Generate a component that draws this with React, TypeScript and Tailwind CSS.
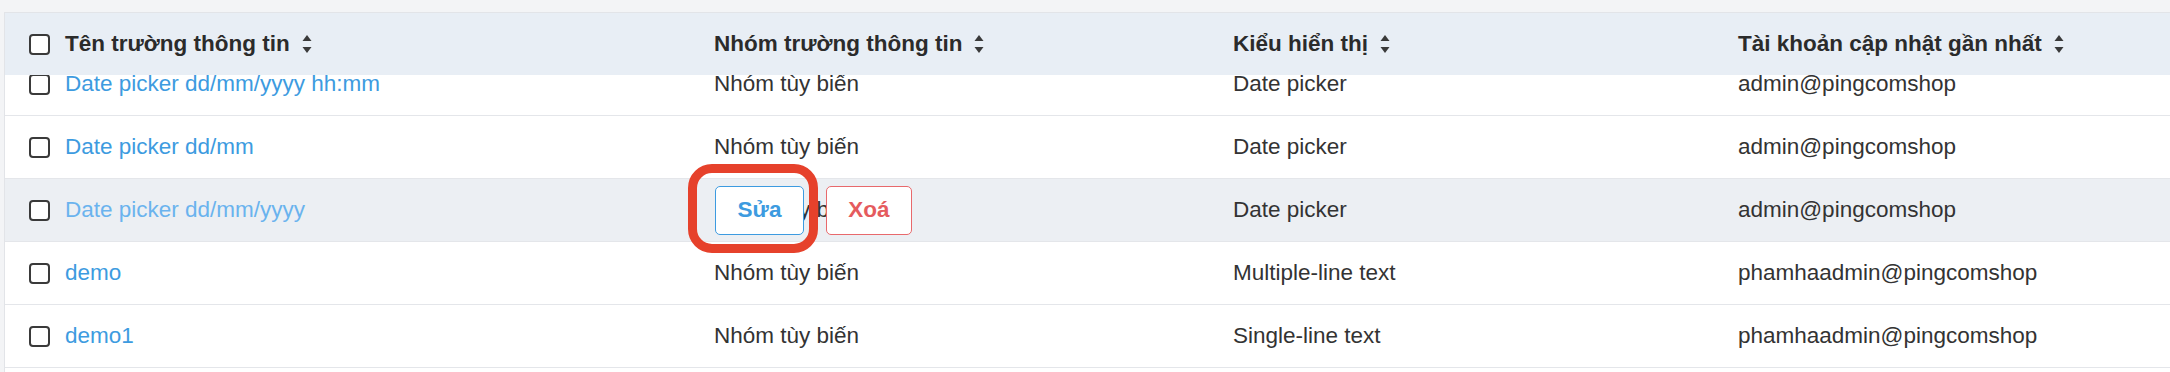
import React from 'react';

type Row = {
  name: string;
  group: string;
  kind: string;
  account: string;
};

const rows: Row[] = [
  { name: 'Date picker dd/mm', group: 'Nhóm tùy biến', kind: 'Date picker', account: 'admin@pingcomshop' },
  { name: 'Date picker dd/mm/yyyy', group: 'Nhóm tùy biến', kind: 'Date picker', account: 'admin@pingcomshop' },
  { name: 'demo', group: 'Nhóm tùy biến', kind: 'Multiple-line text', account: 'phamhaadmin@pingcomshop' },
  { name: 'demo1', group: 'Nhóm tùy biến', kind: 'Single-line text', account: 'phamhaadmin@pingcomshop' },
];

const cols = 'grid grid-cols-[709px_519px_505px_1fr] items-center';

function SortIcon() {
  return (
    <svg width="10" height="18" viewBox="0 0 10 18" className="shrink-0">
      <polygon points="5,0 9.5,6 0.5,6" fill="#3a3a3a" />
      <polygon points="0.5,12 9.5,12 5,18" fill="#3a3a3a" />
    </svg>
  );
}

function Checkbox() {
  return <div className="w-[21px] h-[21px] rounded-[4px] border-[2.5px] border-[#3a3a3a] bg-white shrink-0" />;
}

function HeaderCell({ label, first }: { label: string; first?: boolean }) {
  return (
    <div className={`flex items-center gap-3 ${first ? 'pl-[24px]' : ''}`}>
      {first && <div className="mr-[3px]"><Checkbox /></div>}
      <span className="font-bold text-[#2b2b2b]">{label}</span>
      <SortIcon />
    </div>
  );
}

function DataRow({ row, hovered }: { row: Row; hovered?: boolean }) {
  return (
    <div className={`${cols} h-[63px] border-b border-[#e4e6ea] ${hovered ? 'bg-[#eceff3]' : 'bg-white'}`}>
      <div className="flex items-center gap-[15px] pl-[24px]">
        <Checkbox />
        <span className={hovered ? 'text-[#6ab3ee]' : 'text-[#3d9be0]'}>{row.name}</span>
      </div>
      <div className="relative h-full flex items-center text-[#333]">
        {row.group}
        {hovered && (
          <>
            <div className="absolute left-[1px] top-0 h-full flex items-center gap-[22px]">
              <button className="w-[89px] h-[49px] rounded-[5px] border border-[#3d9be0] bg-white text-[#3d9be0] font-bold">
                Sửa
              </button>
              <button className="w-[86px] h-[49px] rounded-[5px] border border-[#e8696c] bg-white text-[#e55b5e] font-bold">
                Xoá
              </button>
            </div>
            <div className="absolute left-[-26px] top-[-15px] w-[130px] h-[89px] rounded-[24px] border-[9px] border-[#e6412b]" />
          </>
        )}
      </div>
      <div className="text-[#333]">{row.kind}</div>
      <div className="text-[#333]">{row.account}</div>
    </div>
  );
}

export default function App() {
  return (
    <div className="w-[2170px] h-[372px] overflow-hidden bg-[#f3f4f6] pt-[12px] pl-[4px] text-[22.5px] font-['Liberation_Sans',Arial,sans-serif]">
      <div className="bg-white border-l border-t border-[#e2e4e8] h-full">
        <div className={`${cols} h-[62px] bg-[#e8eef5]`}>
          <HeaderCell label="Tên trường thông tin" first />
          <HeaderCell label="Nhóm trường thông tin" />
          <HeaderCell label="Kiểu hiển thị" />
          <HeaderCell label="Tài khoản cập nhật gần nhất" />
        </div>
        {/* first row is scrolled partly under the header */}
        <div className="h-[41px] overflow-hidden">
          <div className="-mt-[22px]">
            <DataRow
              row={{ name: 'Date picker dd/mm/yyyy hh:mm', group: 'Nhóm tùy biến', kind: 'Date picker', account: 'admin@pingcomshop' }}
            />
          </div>
        </div>
        {rows.map((r, i) => (
          <DataRow key={r.name} row={r} hovered={i === 1} />
        ))}
      </div>
    </div>
  );
}
